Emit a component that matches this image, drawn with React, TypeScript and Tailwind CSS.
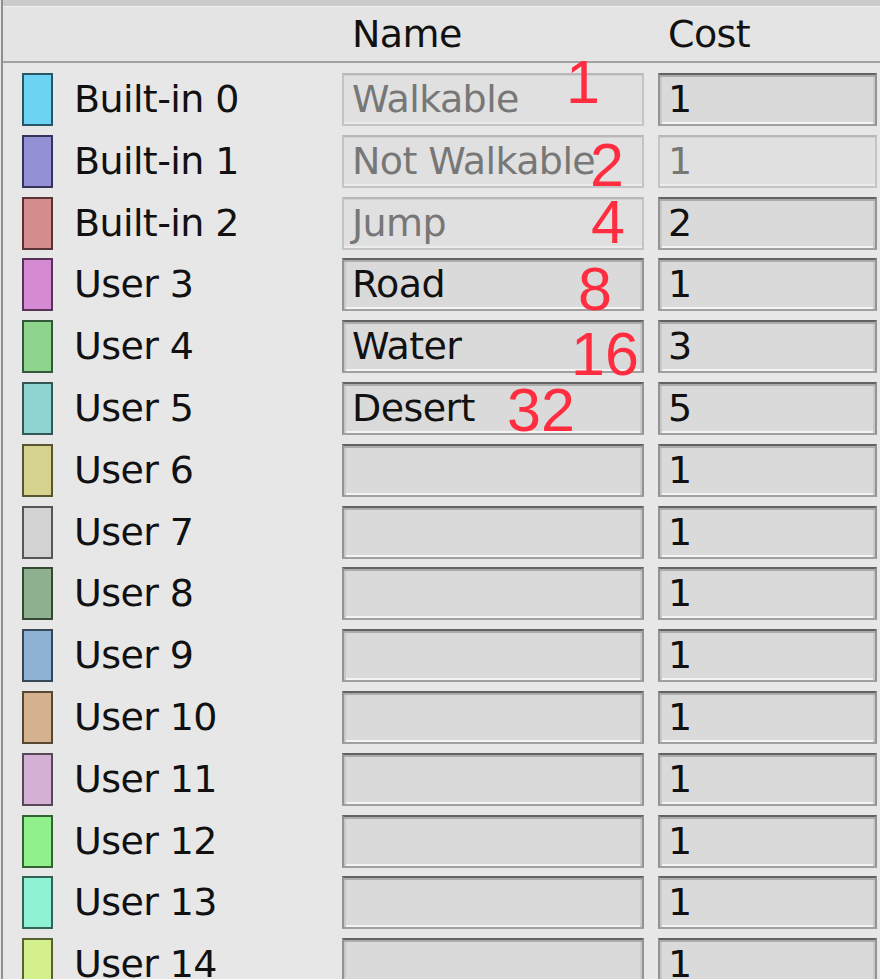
import React from "react";

type Row = {
  label: string;
  color: string;
  border: string;
  name: string;
  nameDisabled?: boolean;
  cost: string;
  costDisabled?: boolean;
};

const rows: Row[] = [
  { label: "Built-in 0", color: "#6dd3f2", border: "#2b5566", name: "Walkable", nameDisabled: true, cost: "1" },
  { label: "Built-in 1", color: "#9490d6", border: "#36345a", name: "Not Walkable", nameDisabled: true, cost: "1", costDisabled: true },
  { label: "Built-in 2", color: "#d68d8d", border: "#5a3434", name: "Jump", nameDisabled: true, cost: "2" },
  { label: "User 3", color: "#d48bd4", border: "#573457", name: "Road", cost: "1" },
  { label: "User 4", color: "#8fd48d", border: "#33573a", name: "Water", cost: "3" },
  { label: "User 5", color: "#8ed5d2", border: "#335757", name: "Desert", cost: "5" },
  { label: "User 6", color: "#d4d28d", border: "#575633", name: "", cost: "1" },
  { label: "User 7", color: "#d2d2d2", border: "#565656", name: "", cost: "1" },
  { label: "User 8", color: "#8fb18f", border: "#344834", name: "", cost: "1" },
  { label: "User 9", color: "#8fb1d4", border: "#344857", name: "", cost: "1" },
  { label: "User 10", color: "#d4b18f", border: "#574834", name: "", cost: "1" },
  { label: "User 11", color: "#d4b1d4", border: "#574857", name: "", cost: "1" },
  { label: "User 12", color: "#8ff08c", border: "#346234", name: "", cost: "1" },
  { label: "User 13", color: "#8ff2d4", border: "#346257", name: "", cost: "1" },
  { label: "User 14", color: "#d4f08c", border: "#576234", name: "", cost: "1" },
];

function Field({ text, disabled, width }: { text: string; disabled?: boolean; width: string }) {
  return (
    <div
      className={
        disabled
          ? `${width} h-[53px] shrink-0 border-2 border-[#c4c4c4] border-t-[#b8b8b8] bg-[#e0e0e0] shadow-[inset_0_1px_0_#d0d0d0,inset_0_-2px_0_#ececec] flex items-center pl-[8px] text-[#777777]`
          : `${width} h-[53px] shrink-0 border-2 border-[#939393] border-t-[#626262] border-b-[#a0a0a0] bg-[#dadada] shadow-[inset_0_2px_0_#acacac,inset_2px_0_0_#c8c8c8,inset_-2px_0_0_#c8c8c8,inset_0_-2px_0_#f4f4f4] flex items-center pl-[8px] text-[#111111]`
      }
    >
      <span className="whitespace-nowrap">{text}</span>
    </div>
  );
}

const marks = [
  { t: "1", left: 566, top: 52 },
  { t: "2", left: 590, top: 135 },
  { t: "4", left: 591, top: 192 },
  { t: "8", left: 578, top: 259 },
  { t: "16", left: 571, top: 324 },
  { t: "32", left: 507, top: 380 },
];

export default function App() {
  return (
    <div
      className="relative w-[880px] h-[979px] overflow-hidden bg-[#e7e7e7] text-[38px] tracking-[-0.6px]"
      style={{ fontFamily: '"DejaVu Sans", "Liberation Sans", sans-serif' }}
    >
      <div className="h-full border-l-2 border-[#8f8f8f] ml-[1px] flex flex-col">
        <div className="h-[7px] bg-[#cbcbcb] border-b border-[#f2f2f2] shrink-0" />
        <div className="h-[56px] shrink-0 bg-[#e4e4e4] border-b-2 border-[#a2a2a2] flex items-center">
          <div className="w-[349px] shrink-0" />
          <div className="w-[316px] shrink-0 text-[#111]">Name</div>
          <div className="text-[#111]">Cost</div>
        </div>
        <div className="flex flex-col gap-[8.8px] pt-[10px]">
          {rows.map((r) => (
            <div key={r.label} className="flex items-center h-[53px] shrink-0">
              <div className="w-[19px] shrink-0" />
              <div
                className="w-[31px] h-[53px] shrink-0 border-2"
                style={{ backgroundColor: r.color, borderColor: r.border }}
              />
              <div className="w-[289px] shrink-0 pl-[21px] text-[#111] whitespace-nowrap">{r.label}</div>
              <Field text={r.name} disabled={r.nameDisabled} width="w-[302px]" />
              <div className="w-[14px] shrink-0" />
              <Field text={r.cost} disabled={r.costDisabled} width="w-[219px]" />
            </div>
          ))}
        </div>
      </div>
      {marks.map((m) => (
        <div
          key={m.t}
          className="absolute text-[61px] leading-none text-[#ff2d3f] tracking-normal"
          style={{ left: m.left, top: m.top, fontFamily: '"Liberation Sans", Arial, sans-serif' }}
        >
          {m.t}
        </div>
      ))}
    </div>
  );
}
